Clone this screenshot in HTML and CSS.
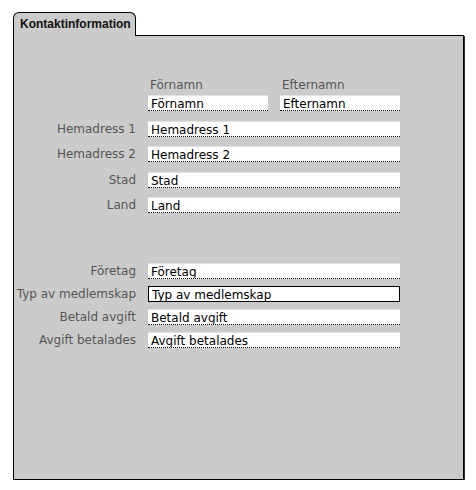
FILE: index.html
```html
<!DOCTYPE html>
<html lang="sv">
<head>
	<meta charset="UTF-8">
	<title>Kontaktinformation</title>
	<link rel="stylesheet" href="styles.css">
</head>
<body>
	<div class="tabs">
		<div class="tab">Kontaktinformation</div>
		<div class="panel">
			<div class="form">
				<span></span>
				<div class="pair">
					<span class="head">Förnamn</span>
					<span class="head">Efternamn</span>
				</div>
				<span></span>
				<div class="pair">
					<input class="field" type="text" value="Förnamn">
					<input class="field" type="text" value="Efternamn">
				</div>
				<label class="lbl">Hemadress 1</label>
				<input class="field" type="text" value="Hemadress 1">
				<label class="lbl">Hemadress 2</label>
				<input class="field" type="text" value="Hemadress 2">
				<label class="lbl">Stad</label>
				<input class="field" type="text" value="Stad">
				<label class="lbl">Land</label>
				<input class="field" type="text" value="Land">
			</div>
			<div class="form form-second">
				<label class="lbl">Företag</label>
				<input class="field" type="text" value="Företag">
				<label class="lbl">Typ av medlemskap</label>
				<input class="field active" type="text" value="Typ av medlemskap">
				<label class="lbl">Betald avgift</label>
				<input class="field" type="text" value="Betald avgift">
				<label class="lbl">Avgift betalades</label>
				<input class="field" type="text" value="Avgift betalades">
			</div>
		</div>
	</div>
</body>
</html>
```

FILE: styles.css
```css
*{
	margin: 0;
	padding: 0;
	box-sizing: border-box;
}
body{
	background: #fff;
	font-family: "DejaVu Sans", Verdana, sans-serif;
	font-size: 12px;
}
.tabs{
	margin: 12px 0 0 13px;
}
.tab{
	display: inline-block;
	position: relative;
	z-index: 2;
	height: 24px;
	margin-bottom: -1px;
	padding: 0 4px 0 6px;
	line-height: 23px;
	font-family: "Liberation Sans", Arial, sans-serif;
	font-weight: bold;
	font-size: 12px;
	color: #111;
	background: #cbcbcb;
	border: 1px solid #000;
	border-bottom: none;
	border-radius: 6px 6px 0 0;
}
.panel{
	position: relative;
	z-index: 1;
	width: 451px;
	height: 445px;
	padding-top: 42px;
	background: #cbcbcb;
	border: 1px solid #000;
	box-shadow: 1px 1px 0 #333;
}
.form{
	display: grid;
	grid-template-columns: 122px 252px;
	column-gap: 12px;
	row-gap: 9.5px;
	align-items: center;
}
.form-second{
	margin-top: 50px;
	row-gap: 7px;
}
.pair{
	display: grid;
	grid-template-columns: 120px 120px;
	column-gap: 12px;
}
.form > span:first-child + .pair{
	margin-bottom: -7.5px;
}
.head{
	padding-left: 2px;
	line-height: 15px;
	color: #555;
}
.lbl{
	text-align: right;
	color: #555;
	white-space: nowrap;
}
.field{
	display: block;
	width: 100%;
	height: 16px;
	padding: 2px 3px 0;
	font-family: "DejaVu Sans", Verdana, sans-serif;
	font-size: 12px;
	line-height: 13px;
	color: #000;
	background: #fff;
	border: none;
	border-top: 1px solid #e2e2e2;
	border-bottom: 1px dotted #000;
	outline: none;
}
.field.active{
	border: 1px solid #000;
}
```
